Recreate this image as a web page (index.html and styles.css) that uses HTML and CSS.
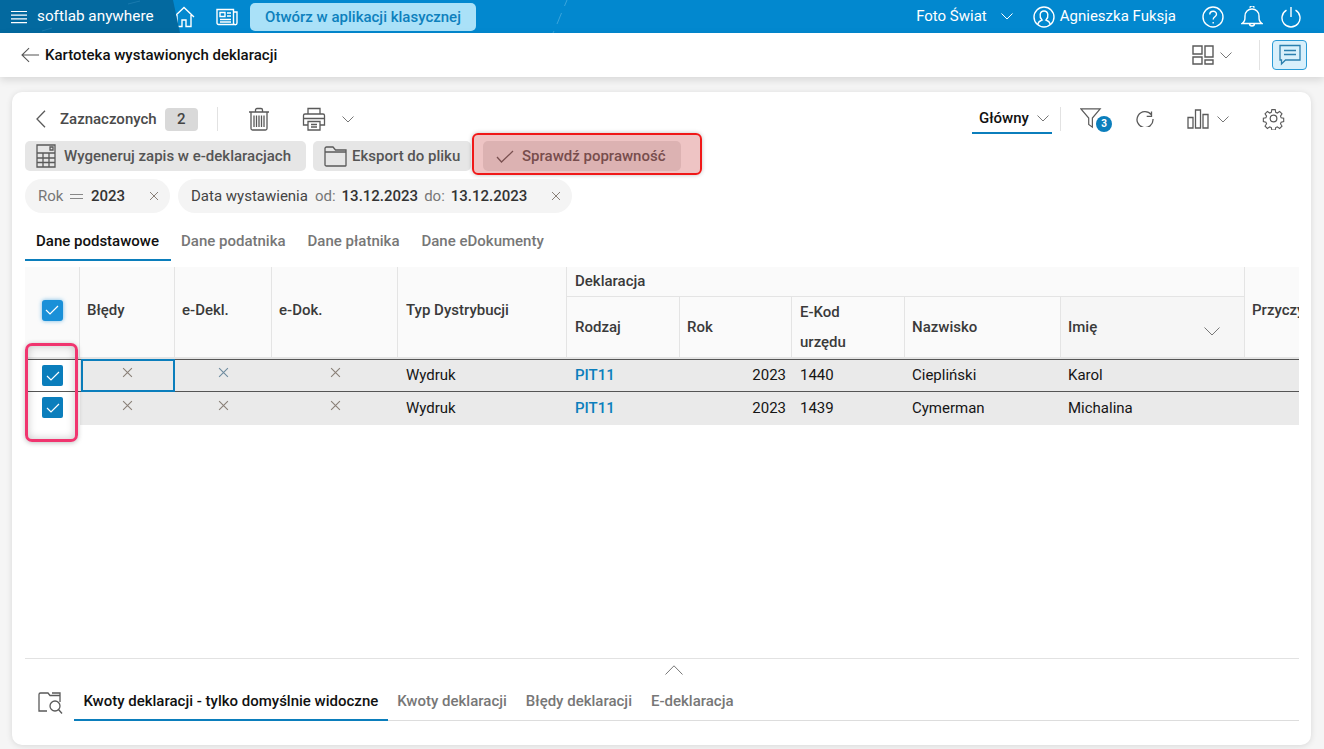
FILE: index.html
```html
<!DOCTYPE html>
<html lang="pl">
<head>
<meta charset="utf-8">
<title>Kartoteka wystawionych deklaracji</title>
<link rel="stylesheet" href="styles.css">
</head>
<body>
<header class="topbar">
  <div class="brand">
    <svg class="brand-marks" viewBox="0 0 180 33" width="180" height="33"><path d="M42 31 52 28M128 4 140 1"/></svg>
    <svg class="ic-menu" viewBox="0 0 16 14" width="16" height="14"><path d="M0 1.500h16M0 5.200h16M0 8.900h16M0 12.600h16"/></svg>
    <span class="brand-name">softlab anywhere</span>
  </div>
  <svg class="ic-white home" viewBox="0 0 22 22" width="22" height="22"><path d="M1 11 11 1.500 21 11M4 9v11.500h5v-6.500h4v6.500h5V9"/></svg>
  <svg class="ic-white news" viewBox="0 0 22 18" width="22" height="18"><path d="M1 1.500h16.500v15H2.500a1.500 1.500 0 0 1-1.500-1.500zM17.500 4H21v11a1.500 1.500 0 0 1-3.500 0M4 4.500h5v4H4zM11 5h4M11 8h4M4 11.500h11M4 14h11"/></svg>
  <button class="open-classic">Otwórz w aplikacji klasycznej</button>
  <svg class="streak" viewBox="0 0 30 33" width="30" height="33"><path d="M21 0 18.500 6M15.500 13 11 24M8 31 7 33"/></svg>
  <div class="top-right">
    <span class="company">Foto Świat</span>
    <svg class="ic-white chev-top" viewBox="0 0 12 7" width="12" height="7"><path d="M.5.500 6 6 11.500.500"/></svg>
    <svg class="ic-white user" viewBox="0 0 22 22" width="22" height="22"><circle cx="11" cy="11" r="10"/><path d="M4.500 18.500c1-3 3-4 4.500-4.500-3-3-2.500-9 2-9s5 6 2 9c1.500.5 3.500 1.500 4.500 4.500"/></svg>
    <span class="user-name">Agnieszka Fuksja</span>
    <svg class="ic-white help" viewBox="0 0 22 22" width="22" height="22"><circle cx="11" cy="11" r="10"/><path d="M7.800 8.500c0-4.300 6.700-4.300 6.700-.300 0 2.600-3.300 2.500-3.300 5.300M11.200 16v1.500"/></svg>
    <svg class="ic-white bell" viewBox="0 0 22 22" width="22" height="22"><path d="M1 17.500c3-2 3-4 3-7.500 0-4 3-7 7-7s7 3 7 7c0 3.500 0 5.500 3 7.500zM9 1.800a2 2 0 0 1 4 0M8.500 17.500a2.500 2.500 0 0 0 5 0"/></svg>
    <svg class="ic-white power" viewBox="0 0 20 22" width="20" height="22"><path d="M10 1v10M5.500 4.200a9 9 0 1 0 9 0"/></svg>
  </div>
</header>

<div class="subbar">
  <svg class="ic back" viewBox="0 0 20 16" width="19" height="16"><path d="M19 8H1M8.500.8 1 8l7.500 7.200"/></svg>
  <h1 class="page-title">Kartoteka wystawionych deklaracji</h1>
  <div class="subbar-right">
    <svg class="ic layout" viewBox="0 0 22 20" width="22" height="20"><path d="M1 1h9v8H1zM13 1h8v11h-8zM1 12h9v7H1zM13 15h8v4h-8z"/></svg>
    <svg class="ic chev chev-l" viewBox="0 0 12 7" width="12" height="7"><path d="M.5.500 6 6 11.500.500"/></svg>
    <span class="vsep vsep-sub"></span>
    <button class="chat">
      <svg viewBox="0 0 24 24" width="24" height="24"><path d="M2 2.500h20v14.500H7.500L3.500 21v-4H2zM6 7.500h12M6 11.500h12"/></svg>
    </button>
  </div>
</div>

<main class="page">
  <section class="card">
    <div class="toolbar">
      <svg class="ic chev-left" viewBox="0 0 10 18" width="10" height="18"><path d="M9 .8 1 9l8 8.200"/></svg>
      <span class="selected-label">Zaznaczonych</span>
      <span class="count">2</span>
      <span class="vsep vsep-tool"></span>
      <svg class="ic trash" viewBox="0 0 22 24" width="22" height="24"><path d="M1 5h20M7.500 5V3a1.500 1.500 0 0 1 1.500-1.500h4A1.500 1.500 0 0 1 14.500 3v2M3 5v16.500A1.500 1.500 0 0 0 4.500 23h13a1.500 1.500 0 0 0 1.500-1.500V5M6 8.500V20M8.500 8.500V20M11 8.500V20M13.500 8.500V20M16 8.500V20"/></svg>
      <svg class="ic printer" viewBox="0 0 24 24" width="24" height="24"><path d="M6 7V1.500h12V7M6 18H1.500V8.500A1.500 1.500 0 0 1 3 7h18a1.500 1.500 0 0 1 1.500 1.500V18H18M6 14.500h12V23H6zM1.500 11.500h21M9 17.500h6M9 20h6"/></svg>
      <svg class="ic chev chev-print" viewBox="0 0 12 7" width="12" height="7"><path d="M.5.500 6 6 11.500.500"/></svg>
      <div class="toolbar-right">
        <div class="view-select"><span>Główny</span><svg class="ic chev" viewBox="0 0 12 7" width="12" height="7"><path d="M.5.500 6 6 11.500.500"/></svg></div>
        <span class="vsep vsep-view"></span>
        <div class="filter">
          <svg class="ic" viewBox="0 0 24 24" width="22" height="24"><path d="M1 2h21l-8.500 10v10L9.500 19v-7z"/></svg>
          <span class="badge">3</span>
        </div>
        <svg class="ic refresh" viewBox="0 0 18 18" width="18" height="18"><path d="M15.500 2.500v4.800h-4.800M15.200 5.500A8 8 0 1 0 17 10"/></svg>
        <svg class="ic bars" viewBox="0 0 22 20" width="22" height="20"><path d="M1 8.500h5V19H1zM8.500 1h5v18h-5zM16 5.500h5V19h-5z"/></svg>
        <svg class="ic chev chev-bars" viewBox="0 0 12 7" width="12" height="7"><path d="M.5.500 6 6 11.500.500"/></svg>
        <svg class="ic gear" viewBox="0 0 24 24" width="23" height="23"><circle cx="12" cy="12" r="3.500"/><path d="M10 1.500h4l.6 3.200 1.900.8 2.700-1.800 2.800 2.800-1.800 2.700.8 1.900 3 .6v4l-3 .6-.8 1.900 1.800 2.700-2.800 2.800-2.700-1.800-1.900.8-.6 3h-4l-.6-3-1.900-.8-2.700 1.800-2.800-2.800 1.800-2.700-.8-1.900-3-.6v-4l3-.6.800-1.900-1.800-2.700 2.800-2.800 2.700 1.800 1.900-.8z" transform="translate(1.400 1.400) scale(.885)"/></svg>
      </div>
    </div>

    <div class="actions">
      <button class="act act-gen">
        <svg class="ic" viewBox="0 0 20 24" width="20" height="24"><path d="M1 1h18v22H1zM1 9h18M1 14h18M1 18.500h18M7 9v14M13 9v14M14 3h3v3h-3z"/></svg>
        <span>Wygeneruj zapis w e-deklaracjach</span>
      </button>
      <button class="act act-exp">
        <svg class="ic" viewBox="0 0 23 21" width="23" height="21"><path d="M1 19V2.500A1.500 1.500 0 0 1 2.500 1H9l2.500 3H22v15.500a.5.5 0 0 1-.5.500h-19A1.500 1.500 0 0 1 1 19zM1 6h21"/></svg>
        <span>Eksport do pliku</span>
      </button>
      <button class="act act-chk">
        <svg class="ic" viewBox="0 0 18 13" width="18" height="13"><path d="M1 7l4.500 5L17 1"/></svg>
        <span>Sprawdź poprawność</span>
      </button>
    </div>

    <div class="chips">
      <div class="chip chip-rok">
        <span class="muted">Rok</span>
        <span class="eq"></span>
        <b>2023</b>
        <svg class="x chip-x" viewBox="0 0 10 10" width="10" height="10"><path d="M1 1l8 8M9 1l-8 8"/></svg>
      </div>
      <div class="chip chip-date">
        <span class="date-name">Data wystawienia</span>
        <span class="muted">od:</span>
        <b>13.12.2023</b>
        <span class="muted">do:</span>
        <b>13.12.2023</b>
        <svg class="x chip-x2" viewBox="0 0 10 10" width="10" height="10"><path d="M1 1l8 8M9 1l-8 8"/></svg>
      </div>
    </div>

    <nav class="tabs">
      <a class="tab active">Dane podstawowe</a>
      <a class="tab">Dane podatnika</a>
      <a class="tab">Dane płatnika</a>
      <a class="tab">Dane eDokumenty</a>
    </nav>

    <div class="table-wrap">
      <table class="grid">
        <colgroup>
          <col class="c1"><col class="c2"><col class="c3"><col class="c4"><col class="c5"><col class="c6"><col class="c7"><col class="c8"><col class="c9"><col class="c10"><col class="c11">
        </colgroup>
        <thead>
          <tr class="hr1">
            <th rowspan="2" class="center"><span class="cb cb-head"><svg viewBox="0 0 14 10" width="14" height="10"><path d="M1 5l4 4 8-8"/></svg></span></th>
            <th rowspan="2" class="up t7">Błędy</th>
            <th rowspan="2" class="up t7">e-Dekl.</th>
            <th rowspan="2" class="up t7">e-Dok.</th>
            <th rowspan="2" class="up">Typ Dystrybucji</th>
            <th colspan="5" class="group">Deklaracja</th>
            <th rowspan="2" class="up t7">Przyczyna</th>
          </tr>
          <tr class="hr2">
            <th>Rodzaj</th>
            <th class="t7">Rok</th>
            <th class="two">E-Kod<br>urzędu</th>
            <th class="t7">Nazwisko</th>
            <th class="sorted t7">Imię<svg class="ic chev sort" viewBox="0 0 16 9" width="16" height="9"><path d="M.5.500 8 8 15.500.500"/></svg></th>
          </tr>
        </thead>
        <tbody>
          <tr>
            <td class="center"><span class="cb"><svg viewBox="0 0 14 10" width="14" height="10"><path d="M1 5l4 4 8-8"/></svg></span></td>
            <td class="mark focus"><svg class="x" viewBox="0 0 10 10" width="11" height="11"><path d="M1 1l8 8M9 1l-8 8"/></svg></td>
            <td class="mark"><svg class="x x-blue" viewBox="0 0 10 10" width="11" height="11"><path d="M1 1l8 8M9 1l-8 8"/></svg></td>
            <td class="mark"><svg class="x" viewBox="0 0 10 10" width="11" height="11"><path d="M1 1l8 8M9 1l-8 8"/></svg></td>
            <td>Wydruk</td>
            <td class="link">PIT11</td>
            <td class="num">2023</td>
            <td>1440</td>
            <td class="t7">Ciepliński</td>
            <td class="t7">Karol</td>
            <td></td>
          </tr>
          <tr>
            <td class="center"><span class="cb"><svg viewBox="0 0 14 10" width="14" height="10"><path d="M1 5l4 4 8-8"/></svg></span></td>
            <td class="mark"><svg class="x" viewBox="0 0 10 10" width="11" height="11"><path d="M1 1l8 8M9 1l-8 8"/></svg></td>
            <td class="mark"><svg class="x" viewBox="0 0 10 10" width="11" height="11"><path d="M1 1l8 8M9 1l-8 8"/></svg></td>
            <td class="mark"><svg class="x" viewBox="0 0 10 10" width="11" height="11"><path d="M1 1l8 8M9 1l-8 8"/></svg></td>
            <td>Wydruk</td>
            <td class="link">PIT11</td>
            <td class="num">2023</td>
            <td>1439</td>
            <td class="t7">Cymerman</td>
            <td class="t7">Michalina</td>
            <td></td>
          </tr>
        </tbody>
      </table>
    </div>

    <div class="bottom">
      <div class="collapse">
        <svg class="ic chev" viewBox="0 0 18 10" width="18" height="10"><path d="M.5 9.500 9 .8l8.500 8.700"/></svg>
      </div>
      <div class="bottom-tabs">
        <svg class="ic bt-icon" viewBox="0 0 26 24" width="26" height="24"><path d="M10 20H2V3.500A1.500 1.500 0 0 1 3.500 2H11l2 2.500h10M15 2h8v2.500M23 4.500V11"/><circle cx="18" cy="15" r="5"/><path d="M21.500 18.500 25 22.500"/></svg>
        <nav class="tabs tabs-bottom">
          <a class="tab active">Kwoty deklaracji - tylko domyślnie widoczne</a>
          <a class="tab">Kwoty deklaracji</a>
          <a class="tab">Błędy deklaracji</a>
          <a class="tab">E-deklaracja</a>
        </nav>
      </div>
    </div>

    <div class="note note-red"></div>
    <div class="note note-pink"></div>
  </section>
</main>
</body>
</html>
```

FILE: styles.css
```css
* { box-sizing: border-box; }
html, body { margin: 0; height: 100%; }
body {
  width: 1324px;
  height: 749px;
  overflow: hidden;
  background: #f5f5f5;
  font-family: Roboto, "Liberation Sans", sans-serif;
  font-size: 15px;
  color: #222;
}
svg { display: block; flex: none; fill: none; }
button { font-family: inherit; border: 0; padding: 0; }
.ic { stroke: #5a5a5a; stroke-width: 1.300; }
.ic-white { stroke: #fff; stroke-width: 1.400; }
.x { stroke: #8a8078; stroke-width: 1; }
.x-blue { stroke: #6f8ca0; }
.chev { stroke: #777; stroke-width: 1; }

/* top bar */
.topbar {
  position: relative;
  display: flex;
  align-items: center;
  height: 33px;
  background: #0288cf;
  color: #fff;
}
.brand {
  position: relative;
  display: flex;
  align-items: center;
  width: 180px;
  height: 33px;
  padding-left: 11px;
  background: #03699f;
  clip-path: polygon(0 0, 173px 0, 180px 33px, 0 33px);
}
.brand-marks { position: absolute; left: 0; top: 0; stroke: #1a7aae; stroke-width: 1; }
.ic-menu { stroke: #fff; stroke-width: 1.200; }
.brand-name { margin-left: 10px; padding-bottom: 1px; font-size: 15.300px; }
.home { margin-left: -7px; }
.news { margin-left: 21px; }
.open-classic {
  margin-left: 12px;
  width: 226px;
  height: 28px;
  border-radius: 5px;
  background: #aae1f8;
  color: #0d80bd;
  font-size: 15px;
  font-weight: 500;
}
.streak { margin-left: 70px; stroke: #3aa5dc; stroke-width: 1; }
.top-right { margin-left: auto; display: flex; align-items: center; padding-right: 23px; }
.company { padding-bottom: 1px; font-size: 15px; }
.chev-top { margin-left: 14px; stroke-width: 1; }
.user { margin-left: 20px; }
.user-name { margin-left: 5px; padding-bottom: 1px; font-size: 15px; }
.help { margin-left: 26px; }
.bell { margin-left: 17px; }
.power { margin-left: 18px; }

/* sub bar */
.subbar {
  position: relative;
  z-index: 2;
  display: flex;
  align-items: center;
  height: 44px;
  padding-left: 21px;
  background: #fff;
  box-shadow: 0 3px 8px rgba(0, 0, 0, .12);
}
.back { stroke: #555; stroke-width: 1.100; }
.page-title { margin: 0 0 0 5px; font-size: 15px; font-weight: 500; color: #111; }
.subbar-right { margin-left: auto; display: flex; align-items: center; padding-right: 17px; }
.layout { stroke-width: 1.400; }
.chev-l { margin-left: 6px; }
.vsep { display: block; width: 1px; background: #e2e2e2; }
.vsep-sub { height: 30px; margin-left: 27px; }
.chat {
  margin-left: 12px;
  width: 35px;
  height: 30px;
  display: flex;
  align-items: center;
  justify-content: center;
  background: #d9f0fb;
  border: 1px solid #2a9bd6;
  border-radius: 4px;
}
.chat svg { stroke: #2b7fae; stroke-width: 1.300; }

/* card */
.page { padding: 15px 13px 4px 12px; height: 672px; }
.card {
  position: relative;
  display: flex;
  flex-direction: column;
  height: 653px;
  padding: 12px 0 0 13px;
  background: #fff;
  border-radius: 10px;
  box-shadow: 0 1px 6px rgba(0, 0, 0, .12);
}

/* toolbar */
.toolbar { display: flex; align-items: center; height: 30px; padding-right: 26px; }
.chev-left { margin-left: 11px; }
.selected-label { margin-left: 14px; font-weight: 500; color: #4a4a4a; }
.count {
  margin-left: 8px;
  width: 33px;
  height: 23px;
  line-height: 23px;
  text-align: center;
  font-weight: 500;
  color: #444;
  background: #d9d9d9;
  border-radius: 4px;
}
.vsep-tool { height: 24px; margin-left: 19px; }
.trash { margin-left: 30px; }
.printer { margin-left: 32px; }
.chev-print { margin-left: 16px; }
.toolbar-right { margin-left: auto; display: flex; align-items: center; }
.view-select {
  display: flex;
  align-items: center;
  gap: 8px;
  width: 80px;
  height: 30px;
  padding-left: 7px;
  border-bottom: 2px solid #0b7ebc;
  font-weight: 500;
  color: #111;
}
.vsep-view { height: 24px; margin-left: 8px; }
.filter { position: relative; margin-left: 19px; width: 33px; height: 26px; }
.badge {
  position: absolute;
  left: 16px;
  top: 10px;
  width: 16px;
  height: 16px;
  border-radius: 50%;
  background: #0b7ebc;
  color: #fff;
  font-size: 10px;
  font-weight: 700;
  line-height: 16px;
  text-align: center;
}
.refresh { margin: 0 0 2px 23px; }
.bars { margin-left: 33px; }
.chev-bars { margin-left: 8px; }
.gear { margin: 0 0 2px 33px; }

/* actions */
.actions { display: flex; gap: 7px; margin-top: 7px; height: 30px; }
.act {
  display: flex;
  align-items: center;
  height: 30px;
  background: #e6e6e6;
  border-radius: 5px;
  font-size: 15px;
  font-weight: 500;
  color: #555;
}
.act-gen { width: 281px; padding-left: 11px; gap: 8px; }
.act-exp { width: 158px; padding-left: 11px; gap: 5px; }
.act-chk { margin-left: 5px; width: 198px; padding-left: 13px; gap: 8px; }

/* chips */
.chips { display: flex; gap: 8px; margin-top: 8px; height: 34px; }
.chip {
  display: flex;
  align-items: center;
  height: 34px;
  padding-left: 13px;
  border-radius: 17px;
  background: #f4f4f4;
}
.chip b { font-weight: 500; color: #333; }
.muted { color: #777; }
.chip-rok { width: 145px; }
.eq { width: 13px; height: 5px; margin: 0 7px 0 7px; border-top: 1px solid #888; border-bottom: 1px solid #888; }
.chip-rok b { margin-left: .5px; }
.chip-x { margin-left: 24px; }
.chip-date { width: 394px; }
.date-name { margin-right: 1px; color: #444; }
.chip-date .muted { margin: 0 6px; }
.chip-x2 { margin-left: 24px; }

/* tabs */
.tabs { display: flex; }
.card > .tabs { margin-top: 9px; height: 39px; }
.card > .tabs .tab.active { margin-right: -1px; padding-right: 12px; }
.tab {
  display: flex;
  align-items: center;
  padding: 0 11px;
  font-weight: 500;
  color: #777;
  border-bottom: 2px solid transparent;
}
.tab.active { color: #111; border-bottom-color: #0b7ebc; }

/* table */
.table-wrap { margin-top: 6px; width: 1274px; overflow: hidden; }
.grid {
  table-layout: fixed;
  width: 1364px;
  border-collapse: separate;
  border-spacing: 0;
}
.c1 { width: 55px; } .c2 { width: 95px; } .c3 { width: 97px; } .c4 { width: 126px; }
.c5 { width: 169px; } .c6 { width: 113px; } .c7 { width: 112px; } .c8 { width: 113px; }
.c9 { width: 156px; } .c10 { width: 184px; } .c11 { width: 144px; }
th {
  position: relative;
  padding: 0 8px;
  text-align: left;
  vertical-align: middle;
  font-weight: 500;
  color: #3a3a3a;
  background: #fafafa;
  border-right: 1px solid #e4e4e4;
  border-bottom: 2px solid #e4e4e4;
}
.hr1 th { height: 30px; }
.hr2 th { height: 61px; }
th.up { padding-bottom: 4px; }
th.center { padding: 0 0 4px; }
th.group { padding-bottom: 2px; border-bottom: 1px solid #e4e4e4; }
th.two { line-height: 30px; }
th.sorted { background: #f6f6f6; }
th.t7, td.t7 { padding-left: 7px; }
.sort { position: absolute; right: 24px; top: 30px; }
td {
  height: 32px;
  padding: 0 8px 1px;
  background: #eaeaea;
  color: #151515;
  border-top: 1px solid #555;
}
tbody tr:last-child td { height: 34px; }
td.center { padding: 0; background: #fff; }
tbody tr:last-child td.center { padding-bottom: 2px; }
.center { text-align: center; }
.cb {
  display: inline-flex;
  align-items: center;
  justify-content: center;
  width: 21px;
  height: 21px;
  vertical-align: middle;
  background: #0b7ebc;
  border-radius: 2px;
}
.cb svg { stroke: #fff; stroke-width: 1.200; }
.cb-head { background: #1a90d8; border-radius: 3px; box-shadow: 0 0 4px rgba(26, 144, 216, .6); }
tbody tr td.mark { padding: 0 0 6px; }
tbody tr:last-child td.mark { padding-bottom: 7px; }
.mark .x { margin: 0 auto; }
td.focus { position: relative; }
td.focus::after {
  content: "";
  position: absolute;
  left: 1px;
  right: 0;
  top: -1px;
  bottom: -1px;
  border: 2px solid #0b7ebc;
}
td.link { color: #0b7ebc; font-weight: 500; }
td.num { text-align: right; padding-right: 6px; }

/* bottom */
.bottom { margin-top: auto; margin-right: 12px; padding-bottom: 24px; }
.collapse {
  display: flex;
  justify-content: center;
  padding: 6px 0 0 24px;
  height: 27px;
  border-top: 1px solid #e2e2e2;
}
.bottom-tabs { display: flex; align-items: center; }
.bt-icon { margin-left: 12px; margin-right: 11px; }
.tabs-bottom { flex: 1; height: 36px; border-bottom: 1px solid #ddd; }
.tabs-bottom .tab { margin-bottom: -1px; padding: 0 9.500px 3px; }

/* annotations */
.note { position: absolute; pointer-events: none; }
.note-red {
  left: 460px;
  top: 41px;
  width: 230px;
  height: 42px;
  background: rgba(200, 60, 60, .3);
  border: 2px solid #f01818;
  border-radius: 6px;
  box-shadow: 0 0 4px rgba(0, 0, 0, .25);
}
.note-pink {
  left: 13px;
  top: 251px;
  width: 53px;
  height: 99px;
  border: 3px solid #f0356f;
  border-radius: 7px;
  box-shadow: 0 1px 5px rgba(0, 0, 0, .25), inset 0 0 8px rgba(0, 0, 0, .22);
}
```
